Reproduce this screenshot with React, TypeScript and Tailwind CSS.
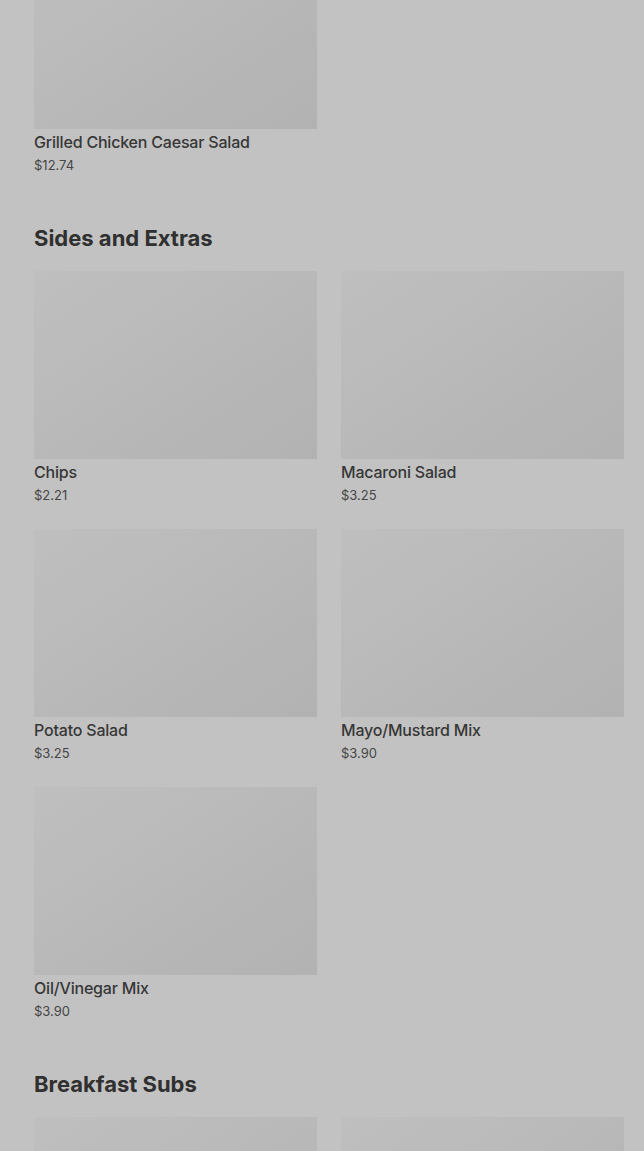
type Item = { name: string; price: string };

const salads: Item[] = [{ name: "Grilled Chicken Caesar Salad", price: "$12.74" }];

const sides: Item[] = [
  { name: "Chips", price: "$2.21" },
  { name: "Macaroni Salad", price: "$3.25" },
  { name: "Potato Salad", price: "$3.25" },
  { name: "Mayo/Mustard Mix", price: "$3.90" },
  { name: "Oil/Vinegar Mix", price: "$3.90" },
];

// only the top of these photos is on screen
const breakfast: Item[] = [
  { name: "", price: "" },
  { name: "", price: "" },
];

function ItemCard({ item }: { item: Item }) {
  return (
    <div className="flex flex-col">
      <div className="h-[188px] w-full bg-linear-to-br from-[#bfbfbf] to-[#b2b2b2]" />
      {item.name && (
        <>
          <div className="mt-px text-base leading-6 font-medium text-[#373737] tracking-[-0.2px]">
            {item.name}
          </div>
          <div className="mt-px text-[13px] leading-5 text-[#464646]">{item.price}</div>
        </>
      )}
    </div>
  );
}

function Section({ title, items }: { title?: string; items: Item[] }) {
  return (
    <section className="flex flex-col">
      {title && (
        <h2 className="mt-[47px] mb-[17px] text-[22px] leading-8 font-bold text-[#303030]">
          {title}
        </h2>
      )}
      <div className="grid grid-cols-2 gap-x-6 gap-y-6">
        {items.map((it, i) => (
          <ItemCard key={i} item={it} />
        ))}
      </div>
    </section>
  );
}

export default function App() {
  return (
    <div
      className="h-[1151px] overflow-hidden bg-[#c2c2c2] pl-[34px] pr-5"
      style={{ fontFamily: "Inter, 'Liberation Sans', sans-serif" }}
    >
      <div className="-mt-[59px]">
        <Section items={salads} />
        <Section title="Sides and Extras" items={sides} />
        <Section title="Breakfast Subs" items={breakfast} />
      </div>
    </div>
  );
}
